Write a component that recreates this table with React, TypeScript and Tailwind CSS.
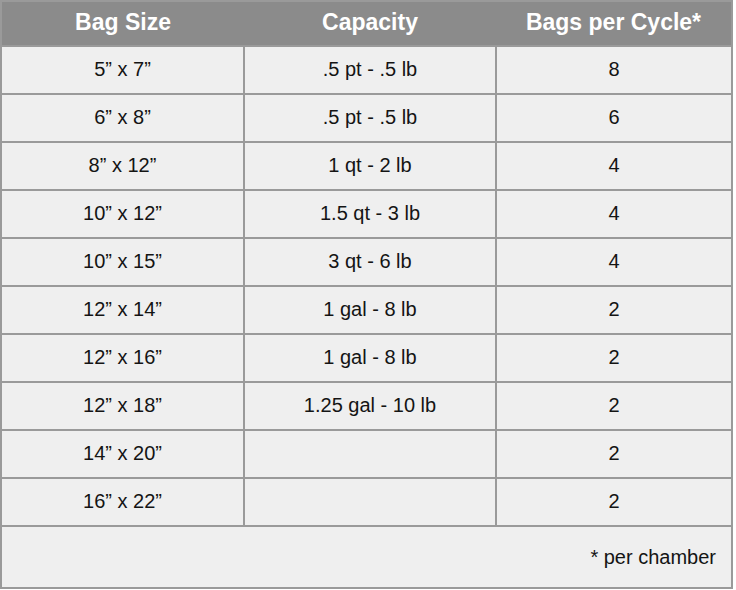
const rows: [string, string, string][] = [
  ['5” x 7”', '.5 pt - .5 lb', '8'],
  ['6” x 8”', '.5 pt - .5 lb', '6'],
  ['8” x 12”', '1 qt - 2 lb', '4'],
  ['10” x 12”', '1.5 qt - 3 lb', '4'],
  ['10” x 15”', '3 qt - 6 lb', '4'],
  ['12” x 14”', '1 gal - 8 lb', '2'],
  ['12” x 16”', '1 gal - 8 lb', '2'],
  ['12” x 18”', '1.25 gal - 10 lb', '2'],
  ['14” x 20”', '', '2'],
  ['16” x 22”', '', '2'],
]

export default function App() {
  return (
    <div className="w-[736px] h-[590px] bg-white font-['Liberation_Sans',Arial,sans-serif]">
      <table className="w-[733px] border-collapse border-2 border-[#9a9a9a] bg-[#efefef] text-[#141414] table-fixed">
        <colgroup>
          <col className="w-[243px]" />
          <col className="w-[252px]" />
          <col />
        </colgroup>
        <thead>
          <tr className="h-[45px] bg-[#8b8b8b] text-white text-[23px] font-bold">
            <th className="border-2 border-[#9a9a9a] border-t-0 border-r-0 pb-0.5">Bag Size</th>
            <th className="border-2 border-[#9a9a9a] border-t-0 border-x-0 pb-0.5">Capacity</th>
            <th className="border-2 border-[#9a9a9a] border-t-0 border-l-0 pb-0.5">Bags per Cycle*</th>
          </tr>
        </thead>
        <tbody>
          {rows.map(([size, cap, bags]) => (
            <tr key={size} className="h-[48px] text-[20px] text-center">
              <td className="border-2 border-[#9a9a9a] pb-0.5">{size}</td>
              <td className="border-2 border-[#9a9a9a] pb-0.5">{cap}</td>
              <td className="border-2 border-[#9a9a9a] pb-0.5">{bags}</td>
            </tr>
          ))}
          <tr className="h-[62px]">
            <td colSpan={3} className="border-2 border-[#9a9a9a] text-right text-[20px] pr-[15px]">
              * per chamber
            </td>
          </tr>
        </tbody>
      </table>
    </div>
  )
}
